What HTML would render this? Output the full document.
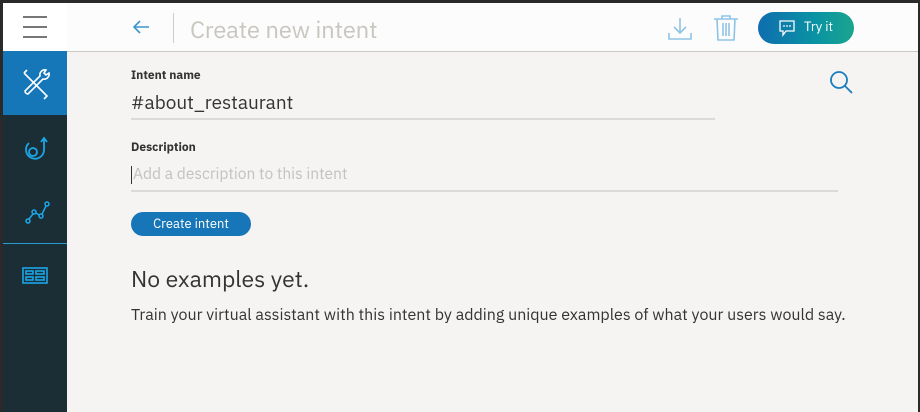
<!DOCTYPE html>
<html><head><style>
*{margin:0;padding:0;box-sizing:border-box}
body{width:920px;height:412px;overflow:hidden;background:#2a2a2a;font-family:"IBM Plex Sans","Liberation Sans",sans-serif;position:relative}
#app{position:absolute;left:3px;top:3px;width:915px;height:409px;background:#f5f4f2}
#hdr{position:absolute;left:0;top:0;width:915px;height:49px;background:#fcfcfc;border-bottom:1px solid #c8c8c6}
#ham{position:absolute;left:0;top:0;width:64px;height:48px;background:#fff}
#side{position:absolute;left:0;top:48px;width:64px;height:361px;background:#1b2e36}
#sel{position:absolute;left:0;top:0;width:64px;height:64px;background:#1577b8}
.t{position:absolute;white-space:nowrap}
</style></head><body>
<div id="app">
<div id="hdr">
 <div id="ham"><svg width="64" height="48"><g stroke="#777" stroke-width="2"><line x1="20" y1="14" x2="44" y2="14"/><line x1="20" y1="24" x2="44" y2="24"/><line x1="20" y1="34" x2="44" y2="34"/></g></svg></div>
 <svg style="position:absolute;left:127px;top:13px" width="22" height="22"><path d="M19 11H4M10 5L4 11L10 17" stroke="#3d95d0" stroke-width="1.6" fill="none"/></svg>
 <div style="position:absolute;left:170px;top:10px;width:1px;height:30px;background:#ccc"></div>
 <div class="t" style="left:187px;top:10px;font-size:24px;color:#c9c6c0;letter-spacing:-0.2px">Create new intent</div>
 <svg style="position:absolute;left:664px;top:13px" width="26" height="26"><g stroke="#8ec3e4" stroke-width="1.6" fill="none"><path d="M13 2V17M7 11L13 17L19 11"/><path d="M2 17V23H24V17"/></g></svg>
 <svg style="position:absolute;left:710px;top:11px" width="26" height="28"><g stroke="#8ec3e4" stroke-width="1.6" fill="none"><path d="M1 5H25M9 5V2H17V5"/><path d="M4 5L5 26H21L22 5"/><path d="M10 9V22M13 9V22M16 9V22"/></g></svg>
 <div style="position:absolute;left:755px;top:9px;width:96px;height:32px;border-radius:16px;background:linear-gradient(90deg,#0f6eae,#0a93a4 60%,#1aa58e)"></div>
 <svg style="position:absolute;left:775px;top:16px" width="18" height="18"><path d="M2 2H16V12H8L5 16L5 12H2Z" stroke="#fff" stroke-width="1.3" fill="none"/><circle cx="6" cy="7" r="0.9" fill="#fff"/><circle cx="9" cy="7" r="0.9" fill="#fff"/><circle cx="12" cy="7" r="0.9" fill="#fff"/></svg>
 <div class="t" style="left:801px;top:15px;font-size:13px;color:#fff">Try it</div>
</div>
<div id="side">
 <div id="sel"><svg width="64" height="64"><g stroke="#fff" stroke-width="1.6" fill="none"><path d="M21 22L43 44M24 19L21 22M39 40L44 45L41 48"/><path d="M43 19a5 5 0 0 0-6 6L22 40a3 3 0 0 0 3 3L40 28a5 5 0 0 0 6-6L43 24L41 22Z"/></g></svg></div>
 <svg style="position:absolute;left:0;top:64px" width="64" height="64"><g stroke="#1aa7e8" stroke-width="1.8" fill="none"><circle cx="30" cy="37" r="4"/><path d="M26 28a9 9 0 1 0 15 7V23M38 27L41 23L44 27"/></g></svg>
 <svg style="position:absolute;left:0;top:128px" width="64" height="64"><g stroke="#1aa7e8" stroke-width="1.5" fill="none"><circle cx="25" cy="42" r="2"/><circle cx="31" cy="33" r="2"/><circle cx="38" cy="37" r="2"/><circle cx="44" cy="25" r="2"/><path d="M26 40L30 35M33 34L36 36M39 35L43 27"/></g></svg>
 <div style="position:absolute;left:0;top:192px;width:64px;height:1px;background:#2b9ad6"></div>
 <svg style="position:absolute;left:0;top:192px" width="64" height="64"><g stroke="#1aa7e8" stroke-width="1.6" fill="none"><rect x="20" y="25" width="24" height="15"/><rect x="23" y="28" width="7" height="3"/><rect x="33" y="28" width="8" height="3"/><rect x="23" y="34" width="7" height="3"/><rect x="33" y="34" width="8" height="3"/></g></svg>
</div>
<div class="t" style="left:128px;top:65px;font-size:12px;font-weight:bold;color:#333">Intent name</div>
<div class="t" style="left:128px;top:88px;font-size:19px;color:#333">#about_restaurant</div>
<div style="position:absolute;left:128px;top:115px;width:584px;height:2px;background:#dcdad7"></div>
<svg style="position:absolute;left:824px;top:66px" width="30" height="30"><g stroke="#1a7dc0" stroke-width="1.8" fill="none"><circle cx="12" cy="11" r="8"/><path d="M18 17L25 24"/></g></svg>
<div class="t" style="left:128px;top:137px;font-size:12px;font-weight:bold;color:#333">Description</div>
<div style="position:absolute;left:128px;top:163px;width:1px;height:18px;background:#333"></div>
<div class="t" style="left:130px;top:161px;font-size:15.6px;color:#c4c2bf">Add a description to this intent</div>
<div style="position:absolute;left:128px;top:187px;width:707px;height:2px;background:#dcdad7"></div>
<div style="position:absolute;left:128px;top:209px;width:120px;height:24px;border-radius:12px;background:#1776b8;color:#fff;font-size:13px;text-align:center;line-height:24px">Create intent</div>
<div class="t" style="left:128px;top:261px;font-size:23px;color:#333">No examples yet.</div>
<div class="t" style="left:128px;top:302px;font-size:16px;color:#333">Train your virtual assistant with this intent by adding unique examples of what your users would say.</div>
</div>
</body></html>
